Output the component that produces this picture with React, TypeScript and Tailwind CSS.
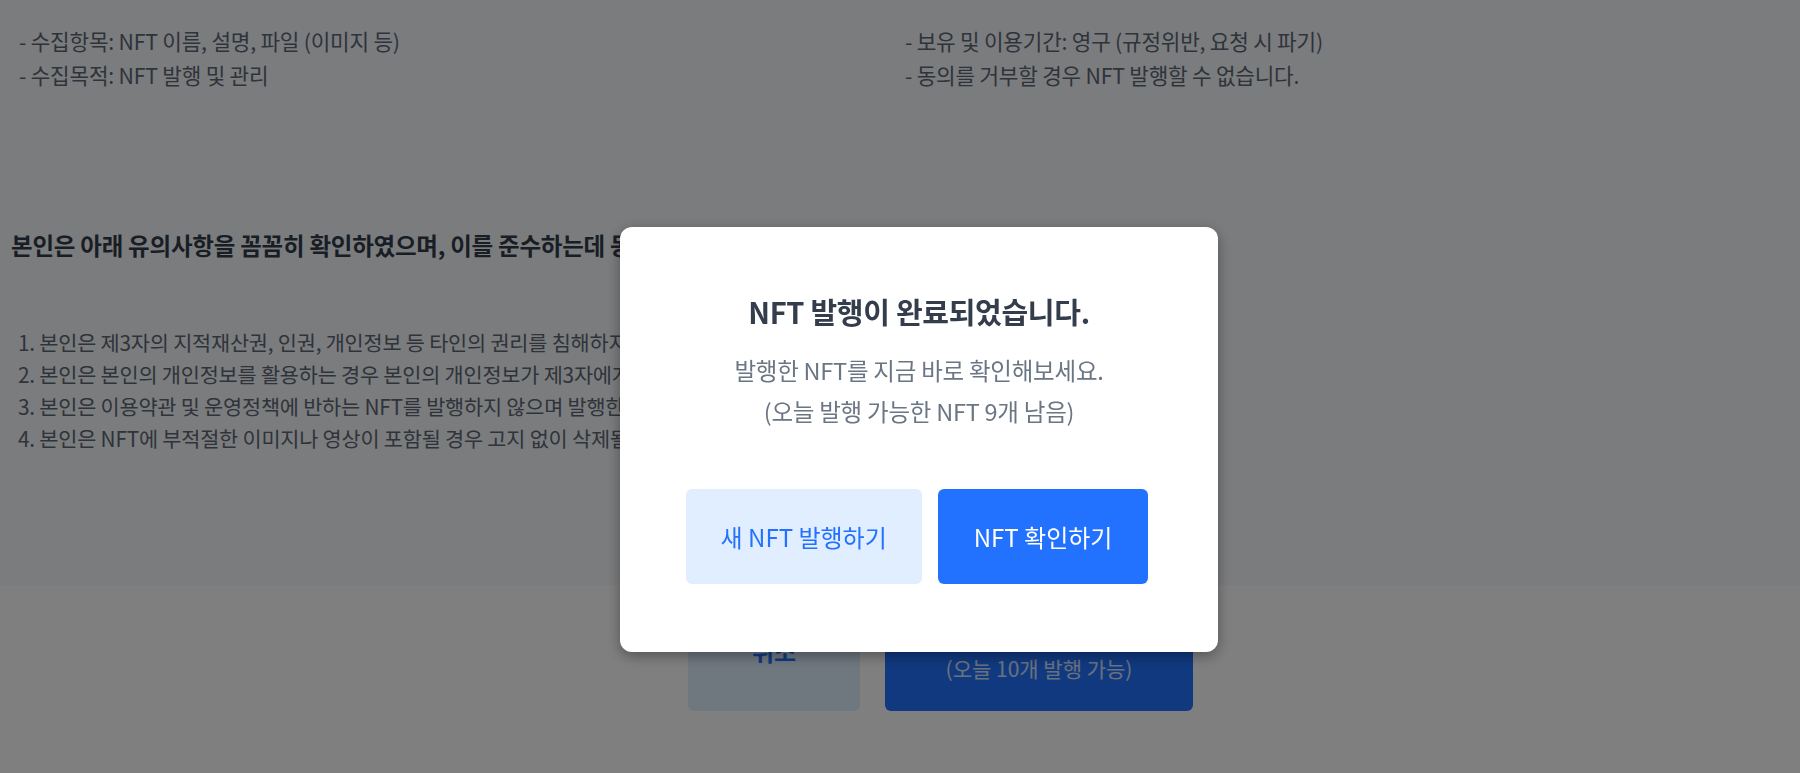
import React from "react";

export default function App() {
  return (
    <div className="relative min-h-[773px] w-full overflow-hidden bg-white font-['Noto_Sans_CJK_KR','Noto_Sans',sans-serif]">
      {/* Page content behind overlay */}
      <div className="bg-[#f7f8fc] h-[585px] flex flex-col">
        <div className="flex pt-[24px] text-[21.3px] leading-[34px] text-[#5e6774] tracking-[-0.01em]">
          <div className="w-[905px] pl-[19px] flex flex-col">
            <span>- 수집항목: NFT 이름, 설명, 파일 (이미지 등)</span>
            <span>- 수집목적: NFT 발행 및 관리</span>
          </div>
          <div className="flex flex-col">
            <span>- 보유 및 이용기간: 영구 (규정위반, 요청 시 파기)</span>
            <span>- 동의를 거부할 경우 NFT 발행할 수 없습니다.</span>
          </div>
        </div>
        <div className="mt-[138px] pl-[11px] text-[23.5px] leading-[30px] font-bold text-[#333d4b] tracking-[-0.01em]">
          본인은 아래 유의사항을 꼼꼼히 확인하였으며, 이를 준수하는데 동의합니다.
        </div>
        <div className="mt-[66px] pl-[18px] flex flex-col text-[20.8px] leading-[32px] text-[#5e6774] tracking-[-0.01em]">
          <span>1. 본인은 제3자의 지적재산권, 인권, 개인정보 등 타인의 권리를 침해하지 않습니다.</span>
          <span>2. 본인은 본인의 개인정보를 활용하는 경우 본인의 개인정보가 제3자에게 공개됩니다.</span>
          <span>3. 본인은 이용약관 및 운영정책에 반하는 NFT를 발행하지 않으며 발행한 NFT의 책임을 집니다.</span>
          <span>4. 본인은 NFT에 부적절한 이미지나 영상이 포함될 경우 고지 없이 삭제될 수 있습니다.</span>
        </div>
      </div>
      <div className="flex pl-[688px] pt-[6px] gap-[25px]">
        <button className="w-[172px] h-[120px] rounded-md bg-[#deeeff] text-[#2272ff] text-[24px] font-bold">
          취소
        </button>
        <button className="w-[308px] h-[120px] rounded-md bg-[#2272ff] text-white flex flex-col items-center justify-center">
          <span className="text-[24px] font-bold leading-[34px]">NFT 발행하기</span>
          <span className="text-[21px] leading-[30px] text-white/80">(오늘 10개 발행 가능)</span>
        </button>
      </div>

      {/* Overlay */}
      <div className="fixed inset-0 bg-black/50">
        <div className="ml-[620px] mt-[227px] w-[598px] h-[425px] bg-white rounded-xl shadow-[0_4px_14px_rgba(0,0,0,0.35)] flex flex-col items-center pt-[65px]">
          <h2 className="text-[29px] leading-[38px] font-bold text-[#333d4b] tracking-[-0.01em]">
            NFT 발행이 완료되었습니다.
          </h2>
          <div className="mt-[20px] flex flex-col items-center text-[23.5px] leading-[41px] text-[#6b7684] tracking-[-0.01em]">
            <span>발행한 NFT를 지금 바로 확인해보세요.</span>
            <span>(오늘 발행 가능한 NFT 9개 남음)</span>
          </div>
          <div className="mt-[57px] flex gap-[16px] pr-[4px]">
            <button className="h-[95px] px-[35px] rounded-md bg-[#e0eeff] text-[#2272ff] text-[24px]">
              새 NFT 발행하기
            </button>
            <button className="h-[95px] px-[36px] rounded-md bg-[#2272ff] text-white text-[24px]">
              NFT 확인하기
            </button>
          </div>
        </div>
      </div>
    </div>
  );
}
